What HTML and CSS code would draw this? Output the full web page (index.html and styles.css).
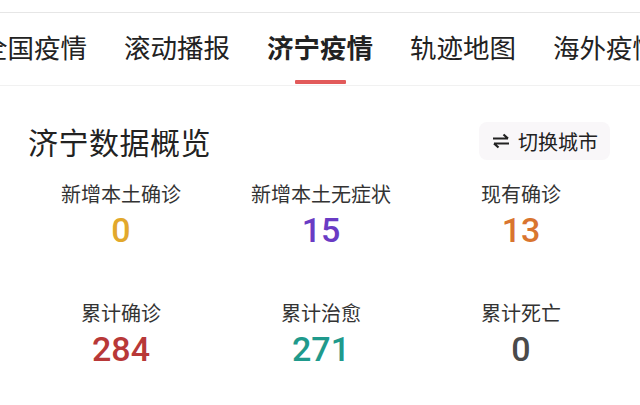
FILE: index.html
```html
<!DOCTYPE html>
<html lang="zh">
<head>
<meta charset="utf-8">
<link rel="stylesheet" href="styles.css">
</head>
<body>
<div class="page">
  <nav class="tabs">
    <span class="tab">全国疫情</span>
    <span class="tab">滚动播报</span>
    <span class="tab active">济宁疫情</span>
    <span class="tab">轨迹地图</span>
    <span class="tab">海外疫情</span>
  </nav>
  <section class="card">
    <div class="head">
      <h1 class="title">济宁数据概览</h1>
      <div class="switch">
        <svg class="swap" viewBox="0 0 20 16" width="20" height="16" aria-hidden="true">
          <path d="M2 5.5H17M12.5 1.5L17 5.5" fill="none" stroke="#222" stroke-width="2.2" stroke-linecap="butt"/>
          <path d="M18 10.5H3M7.5 14.5L3 10.5" fill="none" stroke="#222" stroke-width="2.2" stroke-linecap="butt"/>
        </svg>
        <span>切换城市</span>
      </div>
    </div>
    <div class="stats">
      <div class="stat"><div class="label">新增本土确诊</div><div class="num gold">0</div></div>
      <div class="stat"><div class="label">新增本土无症状</div><div class="num purple">15</div></div>
      <div class="stat"><div class="label">现有确诊</div><div class="num orange">13</div></div>
      <div class="stat"><div class="label">累计确诊</div><div class="num red">284</div></div>
      <div class="stat"><div class="label">累计治愈</div><div class="num teal">271</div></div>
      <div class="stat"><div class="label">累计死亡</div><div class="num gray">0</div></div>
    </div>
    <p class="note">数据来源：国家及各地卫健委每日信息发布　　更新时间：2022-04-10 09:00</p>
  </section>
</div>
</body>
</html>
```

FILE: styles.css
```css
html, body {
  margin: 0;
  padding: 0;
  background: #fff;
}
body {
  width: 640px;
  height: 405px;
  overflow: hidden;
  font-family: "Noto Sans CJK SC", "Noto Sans", sans-serif;
  color: #222;
}
.page {
  padding-top: 12px;
}
.tabs {
  display: flex;
  gap: 37px;
  margin-left: -19px;
  height: 72px;
  align-items: center;
  border-top: 1px solid #e6e6e6;
  border-bottom: 1px solid #f1f1f1;
  white-space: nowrap;
}
.tab {
  position: relative;
  font-size: 26.5px;
  line-height: 36px;
  color: #222;
  flex: none;
  margin-top: -4px;
}
.tab.active {
  font-weight: 700;
}
.tab.active::after {
  content: "";
  position: absolute;
  left: 50%;
  bottom: -19px;
  width: 51px;
  margin-left: -25px;
  height: 4px;
  background: #e25a5a;
  border-radius: 1px;
}
.card {
  padding: 36px 30px 0 28px;
}
.head {
  display: flex;
  justify-content: space-between;
  align-items: center;
  height: 38px;
}
.title {
  margin: 0;
  font-size: 30px;
  font-weight: 400;
  line-height: 38px;
  color: #222;
  letter-spacing: 0.5px;
}
.switch {
  display: flex;
  align-items: center;
  gap: 7px;
  height: 38px;
  padding: 0 12px 0 12px;
  background: #f9f7f9;
  border-radius: 8px;
  font-size: 20px;
  color: #222;
}
.swap {
  display: block;
}
.stats {
  display: grid;
  grid-template-columns: repeat(3, 200px);
  row-gap: 51px;
  margin: 22px 0 0 -7px;
}
.stat {
  display: flex;
  flex-direction: column;
  align-items: center;
}
.label {
  font-size: 20px;
  line-height: 24px;
  color: #333;
}
.num {
  margin-top: 4px;
  font-family: Roboto, "Noto Sans", sans-serif;
  font-weight: 500;
  font-size: 34px;
  line-height: 40px;
}
.gold { color: #e2a82c; }
.purple { color: #6a3bc4; }
.orange { color: #d9752f; }
.red { color: #b83838; }
.teal { color: #1f9a8c; }
.gray { color: #4a4a4a; }
.note {
  margin: 32px 0 0 -3px;
  font-size: 13px;
  color: #f0f0f0;
  white-space: nowrap;
}
```
